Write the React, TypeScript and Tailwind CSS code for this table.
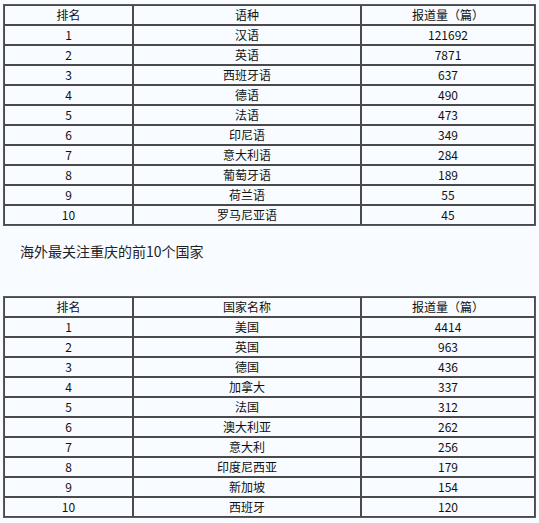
import React from 'react';

type Row = [string, string, string];

const languages: Row[] = [
  ['1', '汉语', '121692'],
  ['2', '英语', '7871'],
  ['3', '西班牙语', '637'],
  ['4', '德语', '490'],
  ['5', '法语', '473'],
  ['6', '印尼语', '349'],
  ['7', '意大利语', '284'],
  ['8', '葡萄牙语', '189'],
  ['9', '荷兰语', '55'],
  ['10', '罗马尼亚语', '45'],
];

const countries: Row[] = [
  ['1', '美国', '4414'],
  ['2', '英国', '963'],
  ['3', '德国', '436'],
  ['4', '加拿大', '337'],
  ['5', '法国', '312'],
  ['6', '澳大利亚', '262'],
  ['7', '意大利', '256'],
  ['8', '印度尼西亚', '179'],
  ['9', '新加坡', '154'],
  ['10', '西班牙', '120'],
];

const cell = 'border border-[#4a4a4a] h-5 p-0 text-center align-middle leading-[18px]';

const DataTable: React.FC<{ head: Row; rows: Row[] }> = ({ head, rows }) => (
  <table className="border-separate border-spacing-0 border border-[#5a5a5a] w-[533px] table-fixed text-[12px] text-[#111]">
    <colgroup>
      <col className="w-[129px]" />
      <col className="w-[228px]" />
      <col />
    </colgroup>
    <tbody>
      <tr>
        {head.map((h, i) => (
          <td key={i} className={cell}>{h}</td>
        ))}
      </tr>
      {rows.map(r => (
        <tr key={r[0]}>
          {r.map((v, i) => (
            <td key={i} className={cell}>{v}</td>
          ))}
        </tr>
      ))}
    </tbody>
  </table>
);

export default function App() {
  return (
    <div
      className="w-[539px] h-[523px] bg-[#f8fbff] pt-1 pl-[3px]"
      style={{ fontFamily: '"Noto Sans CJK SC", "Microsoft YaHei", sans-serif' }}
    >
      <DataTable head={['排名', '语种', '报道量（篇）']} rows={languages} />
      <p className="pl-[17px] pt-[15px] pb-[35px] text-[14px] leading-5 text-[#222]">
        海外最关注重庆的前10个国家
      </p>
      <DataTable head={['排名', '国家名称', '报道量（篇）']} rows={countries} />
    </div>
  );
}
